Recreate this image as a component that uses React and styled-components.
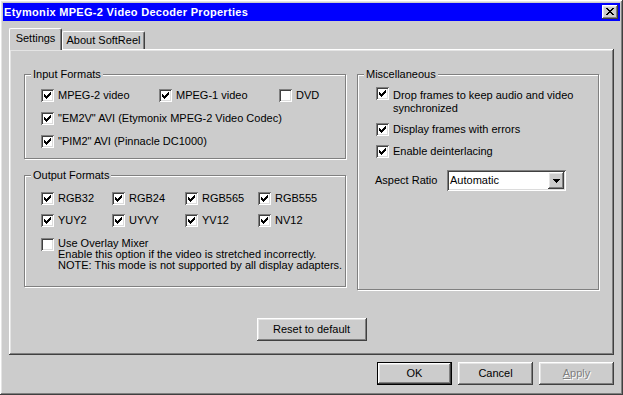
import styled, { createGlobalStyle } from "styled-components";

const Global = createGlobalStyle`
  body {
    margin: 0;
    background: #cccccc;
    font-family: "Liberation Sans", Arial, sans-serif;
    font-size: 11px;
    color: #000;
  }
`;

const raised = `
  box-shadow: inset -1px -1px #404040, inset 1px 1px #ffffff,
    inset -2px -2px #808080, inset 2px 2px #e4e4e4;
`;
const sunken = `
  box-shadow: inset 1px 1px #808080, inset -1px -1px #ffffff,
    inset 2px 2px #404040, inset -2px -2px #dcdcdc;
`;

const Window = styled.div`
  width: 623px;
  height: 395px;
  box-sizing: border-box;
  padding: 3px;
  background: #cccccc;
  ${raised}
`;

const TitleBar = styled.div`
  height: 18px;
  background: #0000ff;
  display: flex;
  align-items: center;
  justify-content: space-between;
  padding: 0 2px 0 0;
`;

const Title = styled.div`
  color: #fff;
  font-weight: bold;
  font-size: 11px;
  letter-spacing: 0.3px;
  line-height: 18px;
  padding-left: 1px;
`;

const CloseButton = styled.div`
  width: 16px;
  height: 14px;
  background: #cccccc;
  display: flex;
  align-items: center;
  justify-content: center;
  ${raised}
  svg {
    margin: 0 1px 1px 0;
  }
`;

const Body = styled.div`
  padding: 7px 0 0 6px;
`;

const TabRow = styled.div`
  display: flex;
  align-items: flex-end;
  height: 21px;
`;

const Tab = styled.div`
  position: relative;
  z-index: 1;
  box-sizing: border-box;
  width: ${(p) => p.$width}px;
  height: ${(p) => (p.$active ? 22 : 18)}px;
  margin-bottom: ${(p) => (p.$active ? -1 : 0)}px;
  padding-top: ${(p) => (p.$active ? 3 : 2)}px;
  text-align: center;
  line-height: 13px;
  background: #cccccc;
  border-top: 1px solid #fff;
  border-left: 1px solid #fff;
  border-right: 1px solid #404040;
  border-top-left-radius: 2px;
  border-top-right-radius: 2px;
  box-shadow: inset -1px 0 #808080;
`;

const Panel = styled.div`
  width: 605px;
  height: 306px;
  box-sizing: border-box;
  padding: 25px 15px 0;
  display: flex;
  flex-direction: column;
  box-shadow: inset -1px -1px #404040, inset 1px 1px #ffffff,
    inset -2px -2px #808080, inset 2px 2px #e4e4e4;
`;

const Columns = styled.div`
  display: grid;
  grid-template-columns: 322px 242px;
  column-gap: 11px;
  align-items: start;
`;

const Stack = styled.div`
  display: flex;
  flex-direction: column;
  gap: ${(p) => p.$gap || 0}px;
`;

const Group = styled.div`
  position: relative;
  box-sizing: border-box;
  height: ${(p) => p.$height}px;
  border: 1px solid #808080;
  box-shadow: inset 1px 1px #fff, 1px 1px #fff;
  padding: ${(p) => p.$pad};
`;

const GroupLabel = styled.span`
  position: absolute;
  top: -7px;
  left: 6px;
  padding: 0 2px;
  line-height: 13px;
  background: #cccccc;
`;

const Grid = styled.div`
  display: grid;
  grid-template-columns: ${(p) => p.$cols};
  margin-top: ${(p) => p.$mt || 0}px;
`;

const CheckLabel = styled.label`
  display: flex;
  align-items: ${(p) => (p.$multi ? "flex-start" : "center")};
  gap: 4px;
  line-height: ${(p) => p.$lh || 13}px;
  margin-top: ${(p) => p.$mt || 0}px;
  white-space: nowrap;
`;

const Box = styled.span`
  flex: none;
  width: 13px;
  height: 13px;
  box-sizing: border-box;
  background: #fff;
  display: flex;
  align-items: center;
  justify-content: center;
  ${sunken}
`;

const Text = styled.span`
  margin-top: ${(p) => p.$mt || 0}px;
`;

const Line = styled.div``;

const CheckMark = () => (
  <svg width="7" height="7" viewBox="0 0 7 7" shapeRendering="crispEdges">
    <path
      fill="#000"
      d="M6 0h1v1h-1z M5 1h2v1h-2z M0 2h1v1h-1z M4 2h3v1h-3z M0 3h2v1h-2z M3 3h3v1h-3z M0 4h5v1h-5z M1 5h3v1h-3z M2 6h1v1h-1z"
    />
  </svg>
);

const Check = ({ checked, children, multi, lh, mt, textMt }) => (
  <CheckLabel $multi={multi} $lh={lh} $mt={mt}>
    <Box>{checked && <CheckMark />}</Box>
    <Text $mt={textMt}>{children}</Text>
  </CheckLabel>
);

const SelectRow = styled.div`
  display: flex;
  align-items: center;
  margin: 12px 0 0 -1px;
`;

const SelectLabel = styled.span`
  width: 72px;
  line-height: 13px;
`;

const Select = styled.div`
  width: 119px;
  height: 21px;
  box-sizing: border-box;
  padding: 2px;
  background: #fff;
  display: flex;
  align-items: center;
  ${sunken}
`;

const SelectText = styled.span`
  flex: 1;
  padding-left: 1px;
  line-height: 17px;
`;

const DropButton = styled.span`
  width: 16px;
  height: 17px;
  background: #cccccc;
  display: flex;
  align-items: center;
  justify-content: center;
  ${raised}
`;

const Button = styled.div`
  box-sizing: border-box;
  width: ${(p) => p.$width}px;
  height: 23px;
  display: flex;
  align-items: center;
  justify-content: center;
  background: #cccccc;
  line-height: 13px;
  color: ${(p) => (p.$disabled ? "#808080" : "#000")};
  text-shadow: ${(p) => (p.$disabled ? "1px 1px #fff" : "none")};
  ${(p) =>
    p.$default
      ? `box-shadow: inset 0 0 0 1px #000, inset -2px -2px #404040, inset 2px 2px #fff,
    inset -3px -3px #808080, inset 3px 3px #e4e4e4;`
      : raised}
`;

const ResetWrap = styled.div`
  margin-top: 28px;
  align-self: center;
`;

const ButtonRow = styled.div`
  width: 605px;
  margin-top: 7px;
  display: flex;
  justify-content: flex-end;
  gap: 6px;
`;

export default function App() {
  return (
    <>
      <Global />
      <Window>
        <TitleBar>
          <Title>Etymonix MPEG-2 Video Decoder Properties</Title>
          <CloseButton>
            <svg width="8" height="7" viewBox="0 0 8 7" shapeRendering="crispEdges">
              <path
                fill="#000"
                d="M0 0h2v1h-2z M6 0h2v1h-2z M1 1h2v1h-2z M5 1h2v1h-2z M2 2h4v1h-4z M3 3h2v1h-2z M2 4h4v1h-4z M1 5h2v1h-2z M5 5h2v1h-2z M0 6h2v1h-2z M6 6h2v1h-2z"
              />
            </svg>
          </CloseButton>
        </TitleBar>
        <Body>
          <TabRow>
            <Tab $active $width={53}>Settings</Tab>
            <Tab $width={83}>About SoftReel</Tab>
          </TabRow>
          <Panel>
            <Columns>
              <Stack $gap={16}>
                <Group $height={85} $pad="14px 0 0 16px">
                  <GroupLabel>Input Formats</GroupLabel>
                  <Stack $gap={10}>
                    <Grid $cols="118px 120px auto">
                      <Check checked>MPEG-2 video</Check>
                      <Check checked>MPEG-1 video</Check>
                      <Check>DVD</Check>
                    </Grid>
                    <Check checked>"EM2V" AVI (Etymonix MPEG-2 Video Codec)</Check>
                    <Check checked>"PIM2" AVI (Pinnacle DC1000)</Check>
                  </Stack>
                </Group>
                <Group $height={112} $pad="16px 0 0 16px">
                  <GroupLabel>Output Formats</GroupLabel>
                  <Grid $cols="71px 73px 73px auto">
                    <Check checked>RGB32</Check>
                    <Check checked>RGB24</Check>
                    <Check checked>RGB565</Check>
                    <Check checked>RGB555</Check>
                  </Grid>
                  <Grid $cols="71px 73px 73px auto" $mt={9}>
                    <Check checked>YUY2</Check>
                    <Check checked>UYVY</Check>
                    <Check checked>YV12</Check>
                    <Check checked>NV12</Check>
                  </Grid>
                  <Check multi lh={11} mt={11}>
                    <Line>Use Overlay Mixer</Line>
                    <Line>Enable this option if the video is stretched incorrectly.</Line>
                    <Line>NOTE: This mode is not supported by all display adapters.</Line>
                  </Check>
                </Group>
              </Stack>
              <Group $height={216} $pad="12px 0 0 18px">
                <GroupLabel>Miscellaneous</GroupLabel>
                <Check checked multi textMt={2}>
                  <Line>Drop frames to keep audio and video</Line>
                  <Line>synchronized</Line>
                </Check>
                <Check checked mt={8}>Display frames with errors</Check>
                <Check checked mt={9}>Enable deinterlacing</Check>
                <SelectRow>
                  <SelectLabel>Aspect Ratio</SelectLabel>
                  <Select>
                    <SelectText>Automatic</SelectText>
                    <DropButton>
                      <svg width="7" height="4" viewBox="0 0 7 4" shapeRendering="crispEdges">
                        <path fill="#000" d="M0 0h7v1h-7z M1 1h5v1h-5z M2 2h3v1h-3z M3 3h1v1h-1z" />
                      </svg>
                    </DropButton>
                  </Select>
                </SelectRow>
              </Group>
            </Columns>
            <ResetWrap>
              <Button $width={110}>Reset to default</Button>
            </ResetWrap>
          </Panel>
          <ButtonRow>
            <Button $width={75} $default>OK</Button>
            <Button $width={75}>Cancel</Button>
            <Button $width={75} $disabled>
              <span>
                <u>A</u>pply
              </span>
            </Button>
          </ButtonRow>
        </Body>
      </Window>
    </>
  );
}
